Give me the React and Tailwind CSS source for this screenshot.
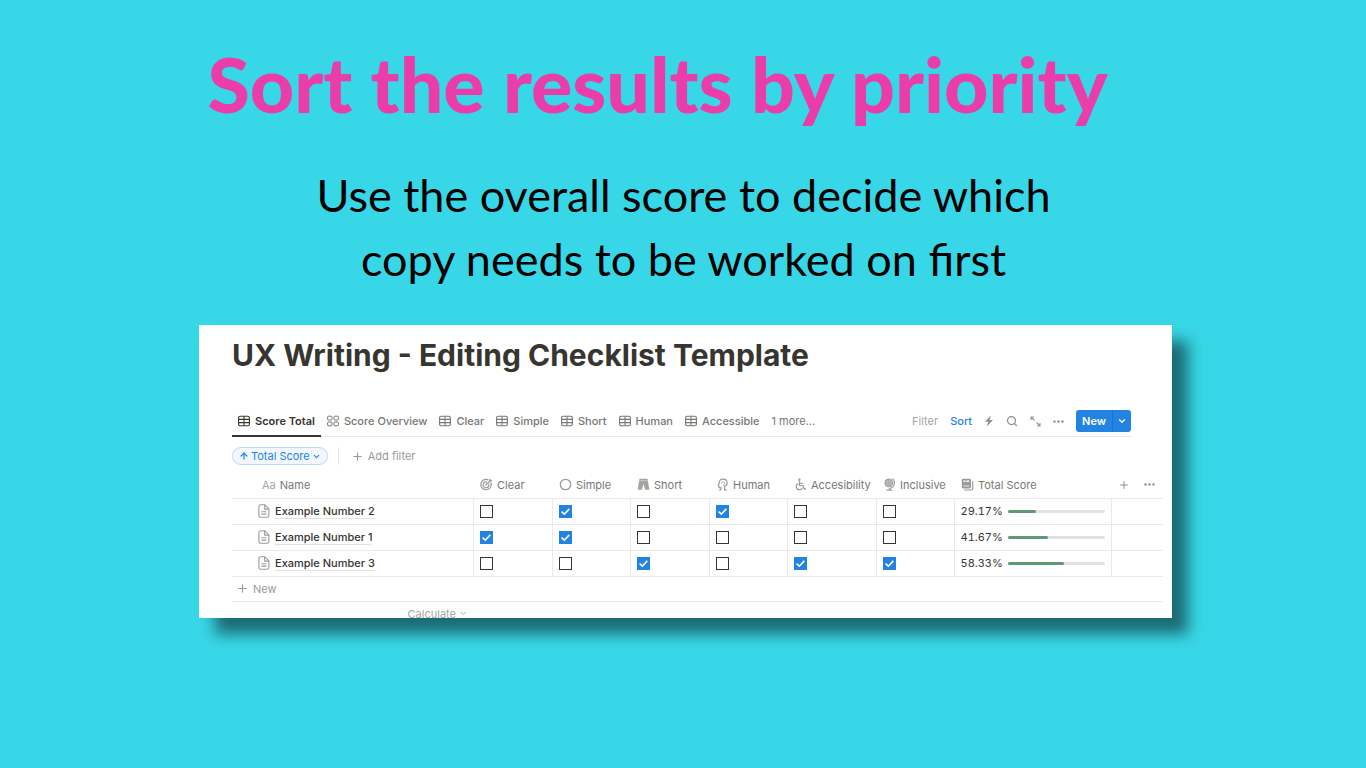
import { ArrowUp, ChevronDown, Plus, Search } from 'lucide-react';

const tabs = ['Score Total', 'Score Overview', 'Clear', 'Simple', 'Short', 'Human', 'Accessible'];

const rows = [
  { name: 'Example Number 2', checks: [false, true, false, true, false, false], score: 29.17 },
  { name: 'Example Number 1', checks: [true, true, false, false, false, false], score: 41.67 },
  { name: 'Example Number 3', checks: [false, false, true, false, true, true], score: 58.33 },
];

function TableIcon() {
  return (
    <svg width="12" height="12" viewBox="0 0 12 12" fill="none" stroke="currentColor" strokeWidth="1.1" className="shrink-0">
      <rect x="0.6" y="1.2" width="10.8" height="9.6" rx="1.6" />
      <path d="M0.6 4.4h10.8M0.6 7.6h10.8M6 1.2v9.6" />
    </svg>
  );
}

function GalleryIcon() {
  return (
    <svg width="12" height="12" viewBox="0 0 12 12" fill="none" stroke="currentColor" className="shrink-0">
      <rect x="0.6" y="1.2" width="4.4" height="3.8" rx="0.9" />
      <rect x="7" y="1.2" width="4.4" height="3.8" rx="0.9" />
      <rect x="0.6" y="7" width="4.4" height="3.8" rx="0.9" />
      <rect x="7" y="7" width="4.4" height="3.8" rx="0.9" />
    </svg>
  );
}

function DocIcon() {
  return (
    <svg width="12" height="14" viewBox="0 0 12 14" fill="none" stroke="#9b9a97" strokeWidth="1.1" className="shrink-0">
      <path d="M2.6 0.8h4.2l4.1 4.1v6.6a1.7 1.7 0 0 1-1.7 1.7H2.6a1.7 1.7 0 0 1-1.7-1.7V2.5A1.7 1.7 0 0 1 2.6 0.8z" />
      <path d="M6.7 0.9v4.2h4.1M3.3 7.7h5.2M3.3 10.1h5.2" />
    </svg>
  );
}

function BoltIcon() {
  return (
    <svg width="10" height="12" viewBox="0 0 10 12" fill="#91918e">
      <path d="M6.9 0.4 1 6.7h3.2L2.8 11.6 9 5H5.7z" />
    </svg>
  );
}

function ExpandIcon() {
  return (
    <svg width="11" height="11" viewBox="0 0 11 11" fill="none" stroke="#9b9a97" strokeWidth="1.2">
      <path d="M4.5 4.5 1 1M1 4V1h3M6.5 6.5 10 10M10 7v3H7" />
    </svg>
  );
}

function DotsIcon() {
  return (
    <svg width="11" height="3" viewBox="0 0 11 3" fill="#91918e">
      <circle cx="1.5" cy="1.5" r="1.2" />
      <circle cx="5.5" cy="1.5" r="1.2" />
      <circle cx="9.5" cy="1.5" r="1.2" />
    </svg>
  );
}

function HeadIcon({ children }) {
  return (
    <svg width="13" height="13" viewBox="0 0 13 13" fill="none" stroke="#9b9a97" strokeWidth="1.2" className="shrink-0">
      {children}
    </svg>
  );
}

const columns = [
  {
    label: 'Clear',
    icon: (
      <HeadIcon>
        <path d="M10.9 4.6a5.2 5.2 0 1 1-2.5-2.7" />
        <path d="M8.7 5.8a2.9 2.9 0 1 1-1.6-1.6" />
        <circle cx="6" cy="6.9" r="0.8" fill="#9b9a97" stroke="none" />
        <path d="M6 6.9 10 3" />
        <path d="M9 3.8V1.9L10.7 0.3v2h2L11 3.8z" fill="#9b9a97" stroke="none" />
      </HeadIcon>
    ),
  },
  { label: 'Simple', icon: <HeadIcon><circle cx="6.5" cy="6.5" r="5.2" strokeWidth="1.3" /></HeadIcon> },
  {
    label: 'Short',
    icon: (
      <HeadIcon>
        <path d="M2.5 0.8h8l1.9 11H8.1L6.7 6.6h-.4L4.9 11.8H0.6z" fill="#a5a4a1" stroke="none" />
        <path d="M2.1 2.7h8.8" stroke="#fff" strokeWidth="0.4" />
      </HeadIcon>
    ),
  },
  {
    label: 'Human',
    icon: (
      <HeadIcon>
        <path d="M4.8 11.9V9.7H3V8l-.8-.6.9-1.7C2.9 3 4.5 1.1 7 1.1s4.1 1.6 4.1 3.8S9.9 7.8 8.6 8.2v3.6h2.2M2.8 12h2.4" />
        <path d="M5.4 5.5c0-1 .7-1.7 1.6-1.7s1.7.7 1.7 1.6S8 6.9 7.1 6.9" strokeWidth="0.9" />
      </HeadIcon>
    ),
  },
  {
    label: 'Accesibility',
    icon: (
      <HeadIcon>
        <circle cx="5.4" cy="1.7" r="1.2" fill="#9b9a97" stroke="none" />
        <path d="M5.4 3.2v4.3h3.7l1.3 3.6 1.5-.6M5.4 5.3h3.3M3.9 5.6a3.3 3.3 0 1 0 4.6 4.2" />
      </HeadIcon>
    ),
  },
  {
    label: 'Inclusive',
    icon: (
      <HeadIcon>
        <circle cx="5.8" cy="4.9" r="3.9" fill="#cfcecb" strokeWidth="1" />
        <path d="M2 5h7.6M5.8 1v7.8M3.4 2.4c1.4 1 3.4 1 4.8 0M3.4 7.4c1.4-1 3.4-1 4.8 0M4.4 1.4c-1 2.3-1 4.7 0 7M7.2 1.4c1 2.3 1 4.7 0 7" strokeWidth="0.6" />
        <path d="M9.4 0.6a5.6 5.6 0 0 1-2.8 9.8M6.3 10.2v2M3.4 12.2h6" />
      </HeadIcon>
    ),
  },
  {
    label: 'Total Score',
    icon: (
      <HeadIcon>
        <rect x="0.8" y="0.8" width="9.2" height="9.6" rx="1.4" fill="#9b9a97" stroke="none" />
        <path d="M2.6 3.3h1.9M5.4 3.3h2.8" stroke="#fff" strokeWidth="1.4" />
        <path d="M2.6 8h5.6" stroke="#fff" strokeWidth="0.8" />
        <path d="M11.7 3.2v7.4a1.4 1.4 0 0 1-1.4 1.4H3.2" />
      </HeadIcon>
    ),
  },
];

function CheckBox({ label, checked }) {
  return (
    <span className="grid w-[13px] h-[13px]">
      <input
        type="checkbox"
        aria-label={label}
        defaultChecked={checked}
        className="peer col-start-1 row-start-1 appearance-none w-[13px] h-[13px] border border-[#37352f] checked:border-[#2383e2] checked:bg-[#2383e2]"
      />
      <svg viewBox="0 0 13 13" fill="none" stroke="#fff" strokeWidth="1.6" className="col-start-1 row-start-1 w-[13px] h-[13px] pointer-events-none opacity-0 peer-checked:opacity-100">
        <path d="M2.6 6.6 5.3 9.2l5-5.3" />
      </svg>
    </span>
  );
}

export default function App() {
  return (
    <main className="min-h-screen bg-[#38d7e7] pl-[199px] pr-[194px] pt-[35px] pb-10 font-['Inter',sans-serif]">
      <h1 className="pr-14 text-center font-['Lato',sans-serif] font-black text-[77px] leading-[96px] text-[#ea3daa] whitespace-nowrap">
        Sort the results by priority
      </h1>
      <p className="mt-8 pr-1 text-center font-['Lato',sans-serif] text-[45px] leading-[64px] text-black whitespace-nowrap">
        Use the overall score to decide which
        <br />
        copy needs to be worked on first
      </p>

      <section className="mt-[34px] bg-white pl-[33px] pr-[9px] pt-[10px] overflow-hidden shadow-[16px_16px_14px_rgba(0,0,0,0.5)] text-[11px] leading-4 text-[#37352f]">
        <h2 className="text-[30px] leading-10 font-bold">UX Writing - Editing Checklist Template</h2>

        {/* Views and actions */}
        <div className="mt-8 mr-8 h-[30px] flex items-start justify-between border-b border-[#e9e9e7]">
          <nav className="flex font-medium text-[#787774]">
            {tabs.map((tab, i) => (
              <a
                key={tab}
                href="#"
                className={`flex items-center gap-[5px] px-[6px] h-[30px] ${i === 0 ? 'text-[#37352f] font-semibold border-b-2 border-[#37352f]' : 'border-b-2 border-transparent'}`}
              >
                {i === 1 ? <GalleryIcon /> : <TableIcon />}
                {tab}
              </a>
            ))}
            <a href="#" className="flex items-center px-[6px] h-[28px] font-normal">1 more...</a>
          </nav>
          <div className="flex items-center gap-3 h-7">
            <button className="text-[#a5a4a1]">Filter</button>
            <button className="text-[#2383e2] font-medium">Sort</button>
            <button aria-label="Automations"><BoltIcon /></button>
            <button aria-label="Search"><Search size={12} strokeWidth={2.5} className="text-[#91918e]" /></button>
            <button aria-label="Expand"><ExpandIcon /></button>
            <button aria-label="More"><DotsIcon /></button>
            <div className="flex h-[22px] rounded-[3px] overflow-hidden bg-[#2383e2] text-white">
              <button className="px-[6px] font-semibold border-r border-[#1c74cb]">New</button>
              <button aria-label="New options" className="px-[4px]"><ChevronDown size={10} strokeWidth={3} /></button>
            </div>
          </div>
        </div>

        {/* Sort and filter bar */}
        <div className="flex items-center h-[18px] mt-[10px]">
          <button className="flex items-center gap-[2px] h-[18px] px-[6px] rounded-full border border-[#bcd9f5] bg-[#f1f7fd] text-[#2383e2]">
            <ArrowUp size={10} strokeWidth={3} />
            Total Score
            <ChevronDown size={9} strokeWidth={3} />
          </button>
          <span className="ml-[10px] w-px h-[18px] bg-[#e9e9e7]" />
          <button className="flex items-center gap-1 ml-3 text-[#9b9a97]">
            <Plus size={13} strokeWidth={2} />
            Add filter
          </button>
        </div>

        <table className="mt-[7px] w-full table-fixed border-collapse">
          <colgroup>
            <col className="w-[241px]" />
            <col className="w-[79px]" />
            <col className="w-[78px]" />
            <col className="w-[79px]" />
            <col className="w-[78px]" />
            <col className="w-[89px]" />
            <col className="w-[78px]" />
            <col className="w-[157px]" />
            <col />
          </colgroup>
          <thead>
            <tr className="h-[26px] border-b border-[#e9e9e7] text-[#787774]">
              <th className="p-0 pl-[30px] text-left font-normal">
                <span className="text-[#a5a4a1] mr-1">Aa</span>Name
              </th>
              {columns.map(c => (
                <th key={c.label} className="p-0 pl-[7px] font-normal">
                  <span className="flex items-center gap-1">{c.icon}{c.label}</span>
                </th>
              ))}
              <th className="p-0 pl-[7px]">
                <span className="flex items-center gap-[14px]">
                  <button aria-label="Add property"><Plus size={12} strokeWidth={2} className="text-[#91918e]" /></button>
                  <button aria-label="More properties"><DotsIcon /></button>
                </span>
              </th>
            </tr>
          </thead>
          <tbody>
            {rows.map(row => (
              <tr key={row.name} className="h-[26px] border-b border-[#e9e9e7]">
                <td className="p-0 pl-[26px] border-r border-[#e9e9e7]">
                  <span className="flex items-center gap-[5px]">
                    <DocIcon />
                    <a href="#" className="font-medium border-b border-[#e3e2e0] leading-[14px]">{row.name}</a>
                  </span>
                </td>
                {row.checks.map((checked, i) => (
                  <td key={columns[i].label} className="p-0 pl-[6px] border-r border-[#e9e9e7]">
                    <CheckBox label={`${row.name} ${columns[i].label}`} checked={checked} />
                  </td>
                ))}
                <td className="p-0 px-[6px] border-r border-[#e9e9e7]">
                  <span className="flex items-center gap-[6px]">
                    <span className="w-[41px] tabular-nums">{row.score}%</span>
                    <span className="flex-1 h-[3px] rounded-full bg-[#e3e2e0]">
                      <span className="block h-[3px] rounded-full bg-[#5f9876]" style={{ width: `${row.score}%` }} />
                    </span>
                  </span>
                </td>
                <td />
              </tr>
            ))}
          </tbody>
        </table>
        <button className="flex items-center gap-1 w-full h-[25px] pl-1 border-b border-[#e9e9e7] text-[#9b9a97]">
          <Plus size={13} strokeWidth={2} />
          New
        </button>
        <div className="flex justify-end w-[242px] h-4 pt-1 pr-[6px] overflow-hidden">
          <button className="flex items-center gap-[3px] h-4 text-[#a5a4a1]">
            Calculate
            <ChevronDown size={9} strokeWidth={2.5} />
          </button>
        </div>
      </section>
    </main>
  );
}
